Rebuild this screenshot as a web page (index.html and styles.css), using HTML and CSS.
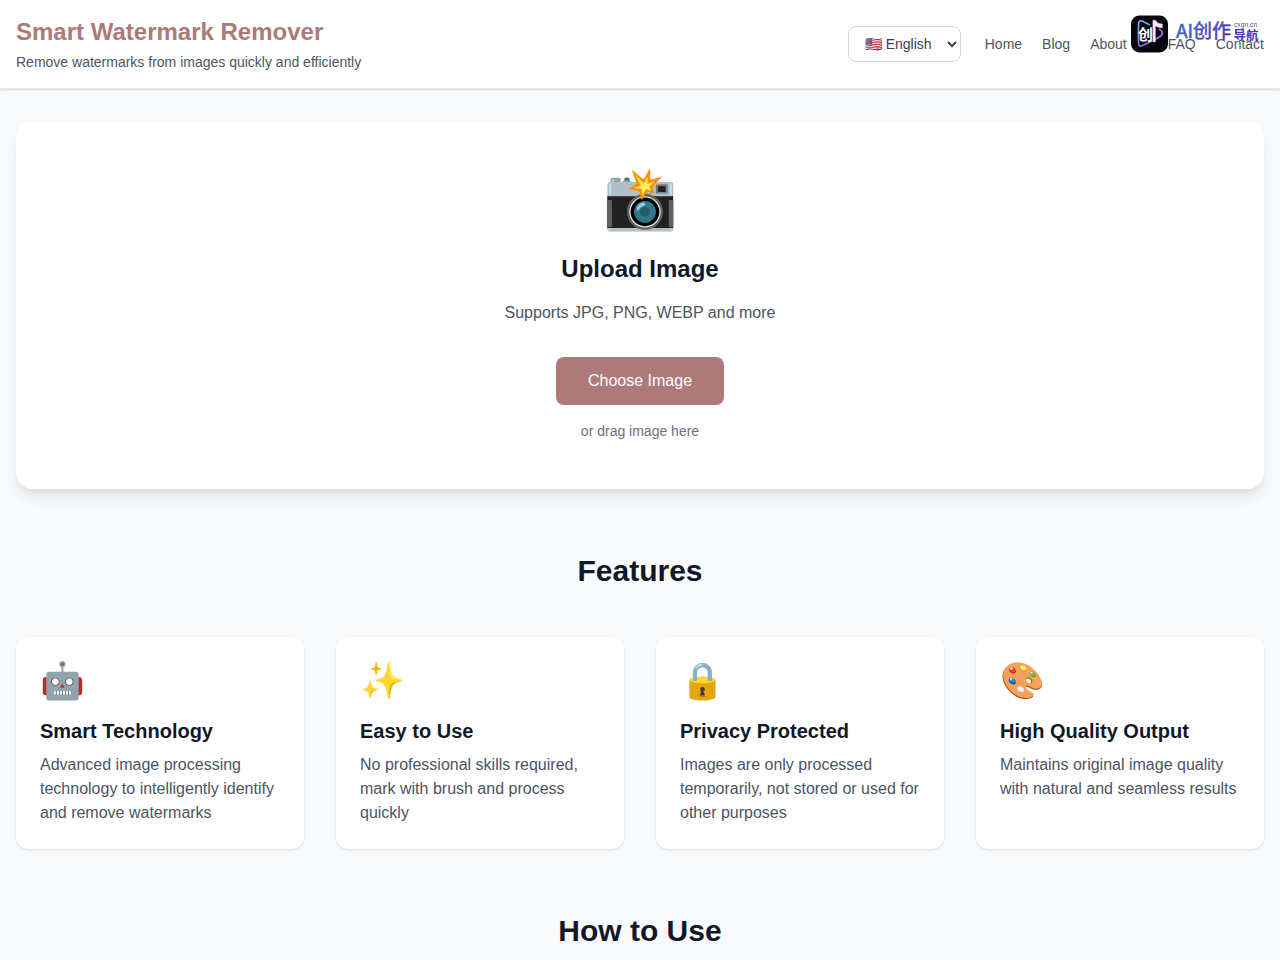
FILE: index.html
```
<!DOCTYPE html>
<html lang="en">
<head>
  <meta charset="UTF-8" />
  <title>Smart Watermark Remover</title>
  <link rel="stylesheet" href="styles.css">
</head>
<body>
  <header class="header">
    <div>
      <h1>Smart Watermark Remover</h1>
      <p class="tagline">Remove watermarks from images quickly and efficiently</p>
    </div>
    <div class="header-right">
      <select class="lang-select" id="langSelect">
        <option value="en">🇺🇸 English</option>
      </select>
      <nav class="nav">
        <a href="#">Home</a>
        <a href="#">Blog</a>
        <a href="#">About</a>
        <a href="#" class="nav-faq">FAQ</a>
        <a href="#">Contact</a>
      </nav>
    </div>
  </header>

  <!-- partner logo -->
  <div class="logo">
    <svg class="logo-svg" width="132" height="40" viewBox="0 0 132 40">
      <defs>
        <linearGradient id="neon" x1="0" y1="0" x2="0.6" y2="1">
          <stop offset="0" stop-color="#5cc8e8" />
          <stop offset="1" stop-color="#b45bd8" />
        </linearGradient>
        <linearGradient id="brand" x1="0" y1="0" x2="1" y2="0.4">
          <stop offset="0" stop-color="#3f74c8" />
          <stop offset="1" stop-color="#4338b0" />
        </linearGradient>
      </defs>
      <rect x="1" y="1.500" width="37" height="37" rx="8.500" fill="#05070d" />
      <path d="M20 11 L12 7 Q8.500 6 8.500 10 V29 Q8.500 33.500 12.500 31.500 L21 27.500 M25 25.500 L31 22 Q33.500 19.500 31.500 17 L29 15" fill="none" stroke="url(#neon)" stroke-width="1.600" />
      <path d="M22.800 28 V6 L26 6.500 Q27 9.500 32.500 10 V14 Q28 14 25.500 12 V28 Z" fill="#fbeafa" stroke="#c982dd" stroke-width="0.500" />
      <text class="logo-mark" x="8" y="26">创</text>
      <text class="logo-name" x="46" y="24" fill="url(#brand)" stroke="url(#brand)">AI创作</text>
      <text class="logo-url" x="104" y="12.500" textLength="23">cxgn.cn</text>
      <text class="logo-sub" x="103.500" y="26">导航</text>
    </svg>
  </div>

  <main>
    <!-- upload -->
    <section class="upload">
      <div class="upload-icon">📸</div>
      <h2>Upload Image</h2>
      <p class="formats">Supports JPG, PNG, WEBP and more</p>
      <button class="choose-btn" type="button">Choose Image</button>
      <p class="drag-tip">or drag image here</p>
    </section>

    <!-- features -->
    <section class="section">
      <h2>Features</h2>
      <div class="feature-grid">
        <div class="feature">
          <div class="feature-icon">🤖</div>
          <h3>Smart Technology</h3>
          <p>Advanced image processing technology to intelligently identify and remove watermarks</p>
        </div>
        <div class="feature">
          <div class="feature-icon">✨</div>
          <h3>Easy to Use</h3>
          <p>No professional skills required, mark with brush and process quickly</p>
        </div>
        <div class="feature">
          <div class="feature-icon">🔒</div>
          <h3>Privacy Protected</h3>
          <p>Images are only processed temporarily, not stored or used for other purposes</p>
        </div>
        <div class="feature">
          <div class="feature-icon">🎨</div>
          <h3>High Quality Output</h3>
          <p>Maintains original image quality with natural and seamless results</p>
        </div>
      </div>
    </section>

    <!-- how to use -->
    <section class="section how-to">
      <h2>How to Use</h2>
    </section>
  </main>
</body>
</html>
```
FILE: styles.css
```
* {
  box-sizing: border-box;
  margin: 0;
  padding: 0;
}
body {
  font-family: "Liberation Sans", Arial, "Noto Sans CJK SC", sans-serif;
  font-size: 16px;
  line-height: 24px;
  background: #f9fafb;
  color: #111827;
}
.header {
  position: relative;
  display: flex;
  justify-content: space-between;
  align-items: center;
  padding: 16px;
  background: white;
  border-bottom: 1px solid #e5e7eb;
  box-shadow: 0 1px 3px rgba(0,0,0,0.1), 0 1px 2px rgba(0,0,0,0.06);
}
.header h1 {
  font-size: 24px;
  line-height: 32px;
  color: #ad7a79;
}
.tagline {
  margin-top: 4px;
  font-size: 14px;
  line-height: 20px;
  color: #4b5563;
}
.header-right {
  display: flex;
  align-items: center;
  gap: 24px;
}
.lang-select {
  width: 113px;
  height: 36px;
  padding: 0 8px 0 12px;
  font-family: inherit;
  font-size: 14px;
  color: #374151;
  background: white;
  border: 1px solid #d1d5db;
  border-radius: 8px;
}
.nav {
  display: flex;
  gap: 20px;
}
.nav a {
  font-size: 14px;
  line-height: 20px;
  color: #4b5563;
  text-decoration: none;
}
.nav .nav-faq {
  margin-left: 21px;
}
.logo {
  position: absolute;
  top: 14px;
  right: 18px;
}
.logo-svg {
  display: block;
}
.logo text {
  font-family: "Noto Sans CJK SC", sans-serif;
}
.logo .logo-mark {
  font-size: 15px;
  font-weight: bold;
  fill: white;
}
.logo .logo-name {
  font-size: 19px;
  stroke-width: 0.5px;
}
.logo .logo-url {
  font-family: "Liberation Sans", sans-serif;
  font-size: 6.5px;
  fill: #4a45b8;
}
.logo .logo-sub {
  font-size: 12.5px;
  font-weight: bold;
  fill: #4338b0;
}
main {
  padding: 32px 16px 0;
}
.upload {
  padding: 48px;
  text-align: center;
  background: white;
  border-radius: 16px;
  box-shadow: 0 10px 15px -3px rgba(0,0,0,0.1), 0 4px 6px -2px rgba(0,0,0,0.05);
}
.upload-icon {
  margin-bottom: 24px;
  font-size: 60px;
  line-height: 60px;
}
.upload h2 {
  margin-bottom: 16px;
  font-size: 24px;
  line-height: 32px;
}
.formats {
  margin-bottom: 32px;
  color: #4b5563;
}
.choose-btn {
  display: block;
  margin: 0 auto 16px;
  padding: 12px 32px;
  font-family: inherit;
  font-size: 16px;
  line-height: 24px;
  color: white;
  background: #ad7a79;
  border: none;
  border-radius: 8px;
  cursor: pointer;
}
.drag-tip {
  font-size: 14px;
  line-height: 20px;
  color: #6b7280;
}
.section {
  margin-top: 64px;
}
.section h2 {
  margin-bottom: 48px;
  font-size: 30px;
  line-height: 36px;
  text-align: center;
}
.section.how-to h2 {
  margin-bottom: 0;
}
.feature-grid {
  display: grid;
  grid-template-columns: repeat(4, 1fr);
  gap: 32px;
}
.feature {
  padding: 24px;
  background: white;
  border-radius: 12px;
  box-shadow: 0 1px 3px rgba(0,0,0,0.1), 0 1px 2px -1px rgba(0,0,0,0.1);
}
.feature-icon {
  margin-bottom: 16px;
  font-size: 36px;
  line-height: 40px;
}
.feature h3 {
  margin-bottom: 8px;
  font-size: 20px;
  line-height: 28px;
}
.feature p {
  color: #4b5563;
}
```
